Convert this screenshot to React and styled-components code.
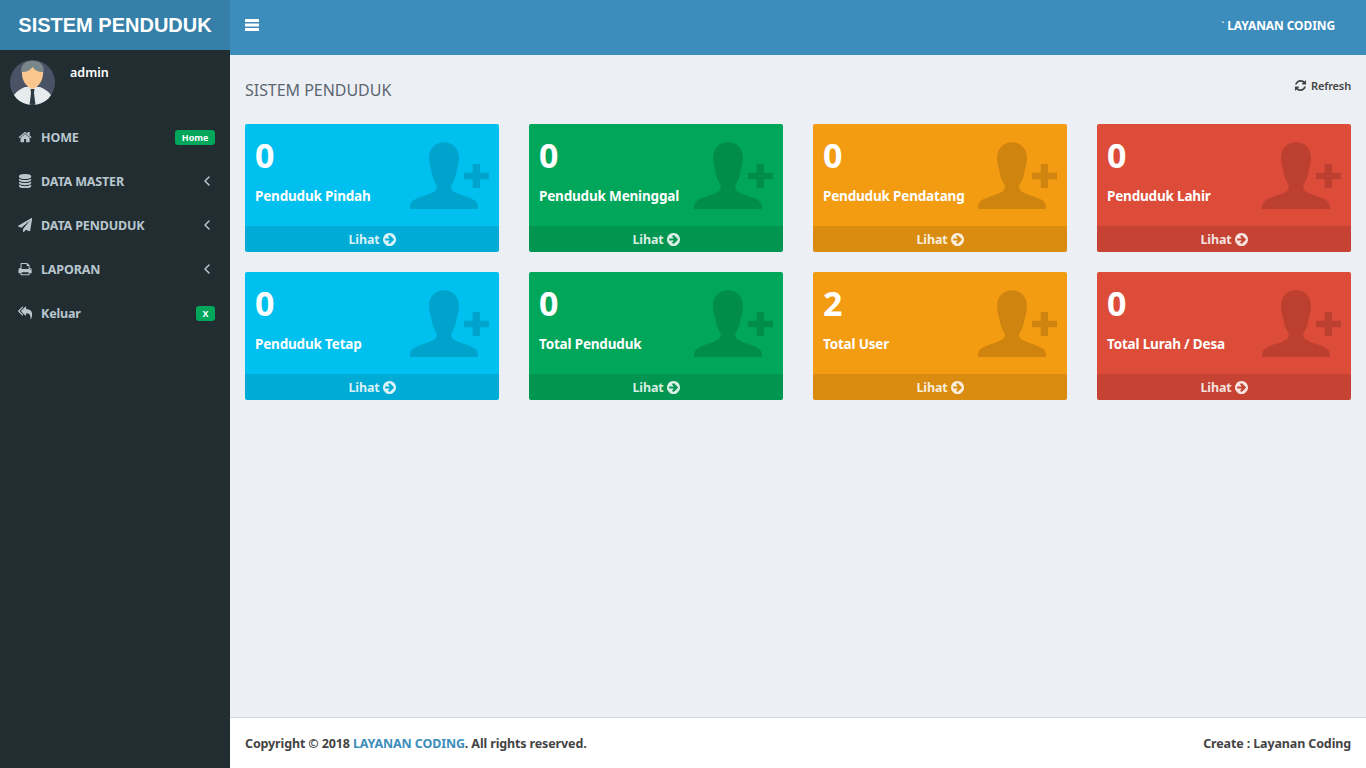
import React from "react";
import styled, { createGlobalStyle } from "styled-components";

const Global = createGlobalStyle`
  html, body { margin: 0; padding: 0; height: 100%; }
  body { font-family: "Noto Sans", "Open Sans", sans-serif; background: #ecf0f5; color: #333; }
  * { box-sizing: border-box; }
`;

const Shell = styled.div`display: grid; grid-template-columns: 230px 1fr; height: 768px; overflow: hidden;`;
const Sidebar = styled.aside`background: #222d32; display: flex; flex-direction: column;`;
const Logo = styled.div`
  height: 50px; background: #367fa9; color: #fff; display: flex; align-items: center; justify-content: center;
  font: bold 20px "Liberation Sans", Arial, sans-serif;
`;
const UserPanel = styled.div`height: 65px; padding: 10px; display: flex; gap: 15px;`;
const Avatar = styled.svg`width: 45px; height: 45px; flex: none;`;
const UserName = styled.div`color: #fff; font-size: 12.5px; font-weight: 600; line-height: 18px; margin-top: 4px;`;
const Menu = styled.nav`display: flex; flex-direction: column;`;
const Item = styled.div`
  height: 44px; display: flex; align-items: center; padding: 0 15px 0 17.5px; color: #b8c7ce;
  font-size: 12.5px; font-weight: 700; letter-spacing: -0.15px;
`;
const ItemIcon = styled.span`width: 23.5px; display: flex; align-items: center; flex: none;`;
const ItemLabel = styled.span`flex: 1;`;
const Badge = styled.span`
  background: #00a65a; color: #fff; font-size: 9px; font-weight: 700; border-radius: 3px; height: 15px;
  display: flex; align-items: center; padding: 0 6.5px; letter-spacing: 0;
`;
const Chevron = styled.svg`
  width: 16px; height: 16px; flex: none; fill: none; stroke: currentColor; stroke-width: 2.2; stroke-linecap: round; stroke-linejoin: round;
`;
const Glyph = styled.svg`
  width: ${p => p.$size}px; height: ${p => p.$size}px; flex: none; fill: currentColor;
`;

const Main = styled.main`display: flex; flex-direction: column; min-width: 0;`;
const TopBar = styled.header`
  height: 55px; background: #3c8dbc; display: flex; align-items: center; justify-content: space-between;
  padding: 0 31px 5px 14.5px; color: #fff;
`;
const Burger = styled.svg`width: 14px; height: 12px; fill: #fff; flex: none;`;
const TopRight = styled.span`font-size: 12px; font-weight: 700; letter-spacing: -0.1px;`;
const Tick = styled.span`font-size: 8px; vertical-align: 2px;`;
const Content = styled.section`flex: 1; padding: 15px; display: flex; flex-direction: column;`;
const TitleRow = styled.div`height: 54px; display: flex; justify-content: space-between; align-items: flex-start;`;
const Title = styled.h1`margin: 9px 0 0; font-size: 16px; font-weight: 400; color: #5c6670; letter-spacing: -0.04px; line-height: 22px;`;
const RefreshLink = styled.span`
  display: flex; align-items: center; gap: 4px; font-size: 11px; font-weight: 600; color: #444; margin-top: 8px; letter-spacing: -0.15px;
`;
const Grid = styled.div`display: grid; grid-template-columns: repeat(4, 254px); column-gap: 30px; row-gap: 20px;`;
const Card = styled.article`
  height: 128px; border-radius: 2px; background: ${p => p.$color}; color: #fff; display: flex; flex-direction: column; position: relative; overflow: hidden;
`;
const CardBody = styled.div`flex: 1; padding: 10px; display: flex; flex-direction: column;`;
const Count = styled.div`font-size: 34px; font-weight: 700; line-height: 42px;`;
const Label = styled.div`font-size: 13.5px; font-weight: 700; line-height: 18px; margin-top: 11px; letter-spacing: -0.18px;`;
const CardIcon = styled.svg`position: absolute; right: 4px; top: 11px; width: 90px; height: 80px; fill: rgba(0,0,0,.15);`;
const CardFooter = styled.div`
  height: 26px; background: rgba(0,0,0,.1); display: flex; align-items: center; justify-content: center; gap: 3px;
  font-size: 12.5px; font-weight: 700; color: rgba(255,255,255,.85); letter-spacing: -0.15px;
`;
const Footer = styled.footer`
  height: 51px; background: #fff; border-top: 1px solid #d2d6de; display: flex; align-items: center; justify-content: space-between;
  padding: 0 15px; font-size: 12.5px; font-weight: 700; color: #444; letter-spacing: -0.13px;
`;
const Accent = styled.span`color: #3c8dbc;`;

const paths = {
  home: "M1472 992v480q0 26-19 45t-45 19h-384v-384h-256v384h-384q-26 0-45-19t-19-45v-480q0-1 .5-3t.5-3l575-474 575 474q1 2 1 6zm223-69l-62 74q-8 9-21 11h-3q-13 0-21-7l-692-577-692 577q-12 8-24 7-13-2-21-11l-62-74q-8-10-7-23.500t11-21.500l719-599q32-26 76-26t76 26l244 204v-195q0-14 9-23t23-9h192q14 0 23 9t9 23v408l219 182q10 8 11 21.500t-7 23.500z",
  database: "M896 768q237 0 443-43t325-127v170q0 69-103 128t-280 93.500-385 34.500-385-34.500-280-93.500-103-128v-170q119 84 325 127t443 43zm0 768q237 0 443-43t325-127v170q0 69-103 128t-280 93.500-385 34.500-385-34.500-280-93.500-103-128v-170q119 84 325 127t443 43zm0-384q237 0 443-43t325-127v170q0 69-103 128t-280 93.500-385 34.500-385-34.500-280-93.500-103-128v-170q119 84 325 127t443 43zm0-1152q208 0 385 34.500t280 93.500 103 128v128q0 69-103 128t-280 93.500-385 34.500-385-34.500-280-93.500-103-128v-128q0-69 103-128t280-93.500 385-34.500z",
  plane: "M1764 11q33 24 27 64l-256 1536q-5 29-32 45-14 8-31 8-11 0-24-5l-453-185-242 295q-18 23-49 23-13 0-22-4-19-7-30.500-23.500t-11.500-36.500v-349l864-1059-1069 925-395-162q-37-14-40-55-2-40 32-59l1664-960q15-9 32-9 20 0 36 11z",
  print: "M448 1536h896v-256h-896v256zm0-640h896v-384h-160q-40 0-68-28t-28-68v-160h-640v640zm1152 64q0-26-19-45t-45-19-45 19-19 45 19 45 45 19 45-19 19-45zm128 0v416q0 13-9.500 22.500t-22.500 9.500h-224v160q0 40-28 68t-68 28h-960q-40 0-68-28t-28-68v-160h-224q-13 0-22.500-9.500t-9.500-22.500v-416q0-79 56.500-135.500t135.500-56.500h64v-544q0-40 28-68t68-28h672q40 0 88 20t76 48l152 152q28 28 48 76t20 88v256h64q79 0 135.500 56.500t56.500 135.500z",
  replyAll: "M640 1082v70q0 42-39 59-13 5-25 5-27 0-45-19l-512-512q-19-19-19-45t19-45l512-512q29-31 70-14 39 17 39 59v69l-397 398q-19 19-19 45t19 45zm1152 38q0 58-17 133.500t-38.500 138-48 125-40.500 90.500l-20 40q-8 17-28 17-6 0-9-1-25-8-23-34 43-400-106-565-64-71-170.500-110.500t-267.500-52.500v251q0 42-39 59-13 5-25 5-27 0-45-19l-512-512q-19-19-19-45t19-45l512-512q29-31 70-14 39 17 39 59v262q411 28 599 221 169 173 169 509z",
  refresh: "M1639 1056q0 5-1 7-64 268-268 434.500t-478 166.500q-146 0-282.500-55t-243.500-157l-129 129q-19 19-45 19t-45-19-19-45v-448q0-26 19-45t45-19h448q26 0 45 19t19 45-19 45l-137 137q71 66 161 102t187 36q134 0 250-65t186-179q11-17 53-117 8-23 30-23h192q13 0 22.500 9.500t9.500 22.500zm25-800v448q0 26-19 45t-45 19h-448q-26 0-45-19t-19-45 19-45l138-138q-148-137-349-137-134 0-250 65t-186 179q-11 17-53 117-8 23-30 23h-199q-13 0-22.500-9.500t-9.500-22.500v-7q65-268 270-434.500t480-166.500q146 0 284 55.500t245 156.500l130-129q19-19 45-19t45 19 19 45z",
  arrow: "M1413 896q0-27-18-45l-91-91-362-362q-18-18-45-18t-45 18l-91 91q-18 18-18 45t18 45l189 189h-502q-26 0-45 19t-19 45v128q0 26 19 45t45 19h502l-189 189q-19 19-19 45t19 45l91 91q18 18 45 18t45-18l362-362 91-91q18-18 18-45zm251 0q0 209-103 385.500t-279.500 279.500-385.500 103-385.500-103-279.500-279.500-103-385.500 103-385.500 279.500-279.500 385.500-103 385.500 103 279.500 279.500 103 385.500z",
};

const Fa = ({ name, size = 14, viewBox = "0 0 1792 1792" }) => (
  <Glyph viewBox={viewBox} $size={size}><path d={paths[name]} /></Glyph>
);

const ChevronLeft = () => (
  <Chevron viewBox="0 0 24 24"><polyline points="15 18 9 12 15 6" /></Chevron>
);

const cards = [
  ["0", "Penduduk Pindah", "#00c0ef"],
  ["0", "Penduduk Meninggal", "#00a65a"],
  ["0", "Penduduk Pendatang", "#f39c12"],
  ["0", "Penduduk Lahir", "#dd4b39"],
  ["0", "Penduduk Tetap", "#00c0ef"],
  ["0", "Total Penduduk", "#00a65a"],
  ["2", "Total User", "#f39c12"],
  ["0", "Total Lurah / Desa", "#dd4b39"],
];

const menu = [
  ["home", "HOME", <Badge>Home</Badge>],
  ["database", "DATA MASTER", <ChevronLeft />],
  ["plane", "DATA PENDUDUK", <ChevronLeft />],
  ["print", "LAPORAN", <ChevronLeft />],
  ["replyAll", "Keluar", <Badge>X</Badge>],
];

const PersonAdd = () => (
  <CardIcon viewBox="0 0 90 80">
    <path d="M5 74C5 69 6 67 9 65 15 61 25 60 30 56 32 54 32 52 31.500 50 29 46 27 42 26.500 36.500 25 31 24 27 24 23 24 14 30 7.300 39 7.300S54 14 54 23C54 27 53 31 51.500 36.500 51 42 49 46 46.500 50 46 52 46 54 48 56 53 60 63 61 69 65 72 67 73 69 73 74Z" />
    <path d="M59 37.700H67.700V29H75V37.700H84V44.300H75V53H67.700V44.300H59Z" />
  </CardIcon>
);

export default function App() {
  return (
    <Shell>
      <Global />
      <Sidebar>
        <Logo>SISTEM PENDUDUK</Logo>
        <UserPanel>
          <Avatar viewBox="0 0 45 45">
            <defs><clipPath id="av"><circle cx="22.5" cy="22.5" r="22.5" /></clipPath></defs>
            <g clipPath="url(#av)">
              <rect width="45" height="45" fill="#4a5366" />
              <path d="M1 45C1 36 6 31 15 27H30C39 31 44 36 44 45Z" fill="#e6ebee" />
              <path d="M11.500 13C10 4 16 .8 22.500 .8S35 4 33.500 13Z" fill="#78878a" />
              <path d="M12 12C16 12 20 11 22.500 7 25 11 29 12 33 12 33.500 20 29 27 22.500 29 16 27 11.500 20 12 12Z" fill="#fcc78e" />
              <path d="M20.500 29H24.500L24 33 25.500 45H19.500L21 33Z" fill="#2d3a46" />
            </g>
          </Avatar>
          <UserName>admin</UserName>
        </UserPanel>
        <Menu>
          {menu.map(([icon, label, right]) => (
            <Item key={label}>
              <ItemIcon><Fa name={icon} size={14.2} /></ItemIcon>
              <ItemLabel>{label}</ItemLabel>
              {right}
            </Item>
          ))}
        </Menu>
      </Sidebar>
      <Main>
        <TopBar>
          <Burger viewBox="0 0 14 12">
            <rect width="14" height="3" rx=".5" />
            <rect y="4.500" width="14" height="3" rx=".5" />
            <rect y="9" width="14" height="3" rx=".5" />
          </Burger>
          <TopRight><Tick>`</Tick> LAYANAN CODING</TopRight>
        </TopBar>
        <Content>
          <TitleRow>
            <Title>SISTEM PENDUDUK</Title>
            <RefreshLink><Fa name="refresh" size={13} /> Refresh</RefreshLink>
          </TitleRow>
          <Grid>
            {cards.map(([n, label, color]) => (
              <Card key={label} $color={color}>
                <CardBody>
                  <Count>{n}</Count>
                  <Label>{label}</Label>
                </CardBody>
                <PersonAdd />
                <CardFooter>Lihat <Fa name="arrow" size={13} viewBox="128 128 1536 1536" /></CardFooter>
              </Card>
            ))}
          </Grid>
        </Content>
        <Footer>
          <span>Copyright © 2018 <Accent>LAYANAN CODING</Accent>. All rights reserved.</span>
          <span>Create : Layanan Coding</span>
        </Footer>
      </Main>
    </Shell>
  );
}
